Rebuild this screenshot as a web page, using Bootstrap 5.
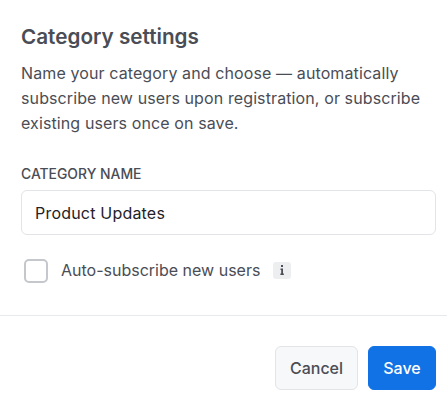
<!DOCTYPE html>
<html lang="en">
<head>
<meta charset="utf-8">
<title>Category settings</title>
<link href="https://cdn.jsdelivr.net/npm/bootstrap@5.3.0/dist/css/bootstrap.min.css" rel="stylesheet">
<style>
html, body { background: #fff; margin: 0; height: 418px; overflow: hidden; }
body { font-family: Inter, Roboto, sans-serif; color: #4b4f56; }
.pane-top { padding: 24px 11px 0 21px; }
.pane-title { font-size: 20.7px; font-weight: 600; line-height: 26px; color: #4a4d55; margin: 0 0 11px; }
.pane-desc { font-size: 16px; letter-spacing: .11px; line-height: 25px; color: #4a4d55; margin: 0 0 29px; }
.name-label { font-size: 13.9px; font-weight: 500; line-height: 18px; color: #4a4d55; margin-bottom: 7px; }
.name-input.form-control { height: 45px; font-size: 16px; letter-spacing: .2px; color: #1f2227; padding: 0 13px; border-color: #e2e4e7; border-radius: 6px; }
.sub-row { margin: 23px 0 0 3px; height: 26px; gap: 13px; }
.sub-box { width: 24px; height: 24px; border: 2px solid #c4c7cb; border-radius: 5px; flex: none; }
.sub-text { font-size: 16px; color: #4a4d55; line-height: 24px; margin-bottom: 2px; }
.info-chip { width: 18px; height: 17px; background: #eceef0; border-radius: 3px; margin-bottom: 2px; }
.pane-rule { border-top: 1px solid #e8e9eb; margin-top: 31px; }
.pane-foot { padding: 30px 11px 0 0; gap: 10px; }
.foot-btn { height: 44px; font-size: 16px; font-weight: 500; border-radius: 6px; padding: 0; }
.foot-cancel { width: 83px; background: #f7f8fa; border: 1px solid #e2e4e7; color: #4a4d55; }
.foot-save { width: 68px; background: #1072e5; border: 1px solid #1072e5; color: #fff; }
</style>
</head>
<body>
<div class="pane-top">
  <h2 class="pane-title">Category settings</h2>
  <p class="pane-desc">Name your category and choose — automatically subscribe new users upon registration, or subscribe existing users once on save.</p>
  <div class="name-label">CATEGORY NAME</div>
  <input class="form-control name-input" type="text" value="Product Updates" aria-label="Category name">
  <div class="d-flex align-items-center sub-row">
    <span class="sub-box"></span>
    <span class="sub-text">Auto-subscribe new users</span>
    <span class="info-chip d-flex align-items-center justify-content-center">
      <svg width="4" height="10" viewBox="0 0 4 10"><rect x="1" y="0" width="2" height="2" fill="#4a4d55"/><path d="M0.5 3.5H3V8.5H3.8V10H0.4V8.5H1.2V5H0.5Z" fill="#4a4d55"/></svg>
    </span>
  </div>
</div>
<div class="pane-rule"></div>
<div class="d-flex justify-content-end pane-foot">
  <button type="button" class="btn foot-btn foot-cancel">Cancel</button>
  <button type="button" class="btn foot-btn foot-save">Save</button>
</div>
<script src="https://cdn.jsdelivr.net/npm/bootstrap@5.3.0/dist/js/bootstrap.bundle.min.js"></script>
</body>
</html>
